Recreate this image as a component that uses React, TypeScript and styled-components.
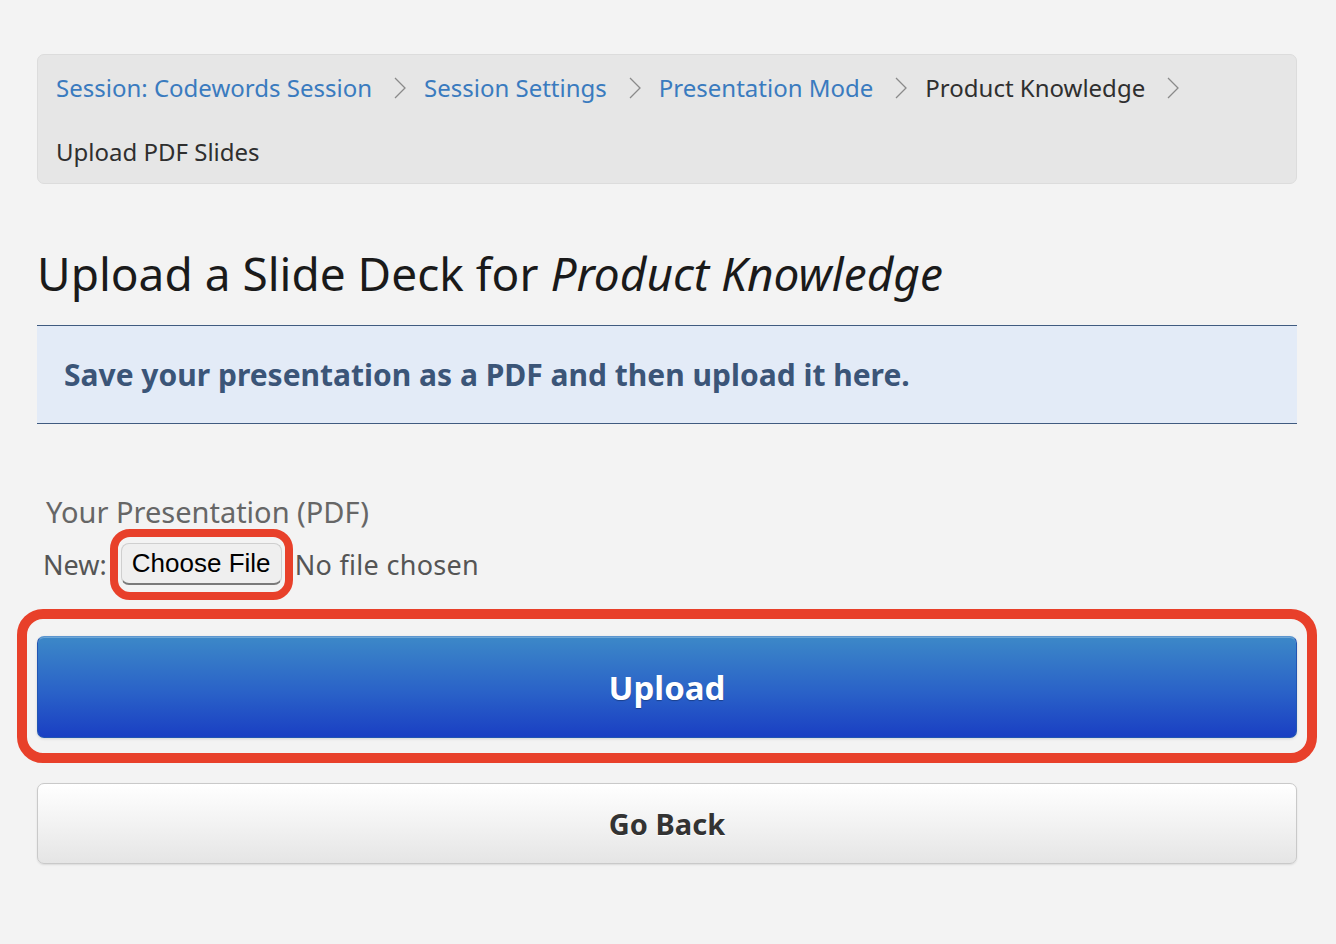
import React from "react";
import styled, { createGlobalStyle } from "styled-components";

const Global = createGlobalStyle`
  html, body { margin: 0; padding: 0; background: #f3f3f3; }
  body { font-family: "Noto Sans", "DejaVu Sans", sans-serif; }
`;

const Page = styled.div`
  padding: 54px 39px 80px 37px;
`;

const Crumbs = styled.nav`
  background: #e6e6e6;
  border: 1px solid #dcdcdc;
  border-radius: 7px;
  padding: 13px 18px 11px 18px;
  display: flex;
  flex-wrap: wrap;
  align-items: center;
  row-gap: 24px;
  column-gap: 17px;
  font-size: 24px;
  line-height: 40px;
`;

const Crumb = styled.span<{ $link?: boolean }>`
  color: ${(p) => (p.$link ? "#3a7bbf" : "#2f2f2f")};
  white-space: nowrap;
`;

const Chevron = styled.svg`
  width: 14px;
  height: 24px;
  flex: none;
  margin: 0 0 0 4px;
`;

const Sep = () => (
  <Chevron viewBox="0 0 14 24">
    <path d="M2 2 L12 12 L2 22" fill="none" stroke="#8a8a8a" strokeWidth="1.3" />
  </Chevron>
);

const Heading = styled.h1`
  margin: 62px 0 0 0;
  font-size: 46px;
  font-weight: 400;
  line-height: 54px;
  color: #1a1a1a;
  em { font-style: italic; }
`;

const Notice = styled.div`
  margin-top: 25px;
  background: #e3ebf7;
  border-top: 1px solid #405b80;
  border-bottom: 1px solid #405b80;
  padding: 0 0 0 27px;
  height: 97px;
  display: flex;
  align-items: center;
  color: #3b5578;
  font-weight: 700;
  font-size: 30px;
`;

const Field = styled.div`
  margin-top: 68px;
  padding-left: 6px;
`;

const Label = styled.div`
  color: #666;
  font-size: 29px;
  line-height: 40px;
  padding-left: 3px;
`;

const FileRow = styled.div`
  margin-top: 11px;
  display: flex;
  align-items: center;
  font-size: 27px;
  color: #555;
`;

const NewLabel = styled.span`
  margin-right: 14px;
`;

const Ringed = styled.span<{ $inset: string; $radius: number; $w: number }>`
  position: relative;
  display: inline-flex;
  &::after {
    content: "";
    position: absolute;
    inset: ${(p) => p.$inset};
    border: ${(p) => p.$w}px solid #e8402a;
    border-radius: ${(p) => p.$radius}px;
    pointer-events: none;
  }
`;

const ChooseBtn = styled.button`
  font-family: "Liberation Sans", Arial, sans-serif;
  font-size: 26px;
  color: #000;
  background: #efefef;
  border: 1px solid #cfcfcf;
  border-bottom: 2px solid #7a7a7a;
  border-radius: 8px;
  height: 42px;
  width: 161px;
  padding: 0;
  display: flex;
  align-items: center;
  justify-content: center;
`;

const NoFile = styled.span`
  margin-left: 13px;
  letter-spacing: 0.3px;
`;

const UploadWrap = styled(Ringed)`
  display: flex;
  margin-top: 51px;
`;

const UploadBtn = styled.button`
  width: 100%;
  height: 102px;
  border: 1px solid #2155b3;
  border-top-color: #5b95cf;
  border-radius: 7px;
  background: linear-gradient(#3c88c8, #2a62c8 55%, #1a3fc3);
  box-shadow: inset 0 1px 0 rgba(255, 255, 255, 0.25), 0 1px 3px rgba(0, 0, 0, 0.12);
  color: #fff;
  font-family: "Noto Sans", sans-serif;
  font-size: 33px;
  font-weight: 700;
  text-shadow: 0 1px 1px rgba(0, 0, 0, 0.3);
`;

const BackBtn = styled.button`
  display: block;
  width: 100%;
  margin-top: 45px;
  height: 81px;
  border: 1px solid #c9c9c9;
  border-radius: 7px;
  background: linear-gradient(#ffffff, #f1f1f1 55%, #e5e5e5);
  box-shadow: 0 1px 2px rgba(0, 0, 0, 0.1);
  color: #333;
  font-family: "Noto Sans", sans-serif;
  font-size: 29px;
  font-weight: 700;
  text-shadow: 0 1px 0 #fff;
`;

export default function App() {
  return (
    <>
      <Global />
      <Page>
        <Crumbs>
          <Crumb $link>Session: Codewords Session</Crumb>
          <Sep />
          <Crumb $link>Session Settings</Crumb>
          <Sep />
          <Crumb $link>Presentation Mode</Crumb>
          <Sep />
          <Crumb>Product Knowledge</Crumb>
          <Sep />
          <Crumb>Upload PDF Slides</Crumb>
        </Crumbs>
        <Heading>
          Upload a Slide Deck for <em>Product Knowledge</em>
        </Heading>
        <Notice>Save your presentation as a PDF and then upload it here.</Notice>
        <Field>
          <Label>Your Presentation (PDF)</Label>
          <FileRow>
            <NewLabel>New:</NewLabel>
            <Ringed $inset="-14px -11px -15px -11px" $radius={20} $w={8}>
              <ChooseBtn>Choose File</ChooseBtn>
            </Ringed>
            <NoFile>No file chosen</NoFile>
          </FileRow>
        </Field>
        <UploadWrap $inset="-27px -20px -25px -20px" $radius={26} $w={10}>
          <UploadBtn>Upload</UploadBtn>
        </UploadWrap>
        <BackBtn>Go Back</BackBtn>
      </Page>
    </>
  );
}
